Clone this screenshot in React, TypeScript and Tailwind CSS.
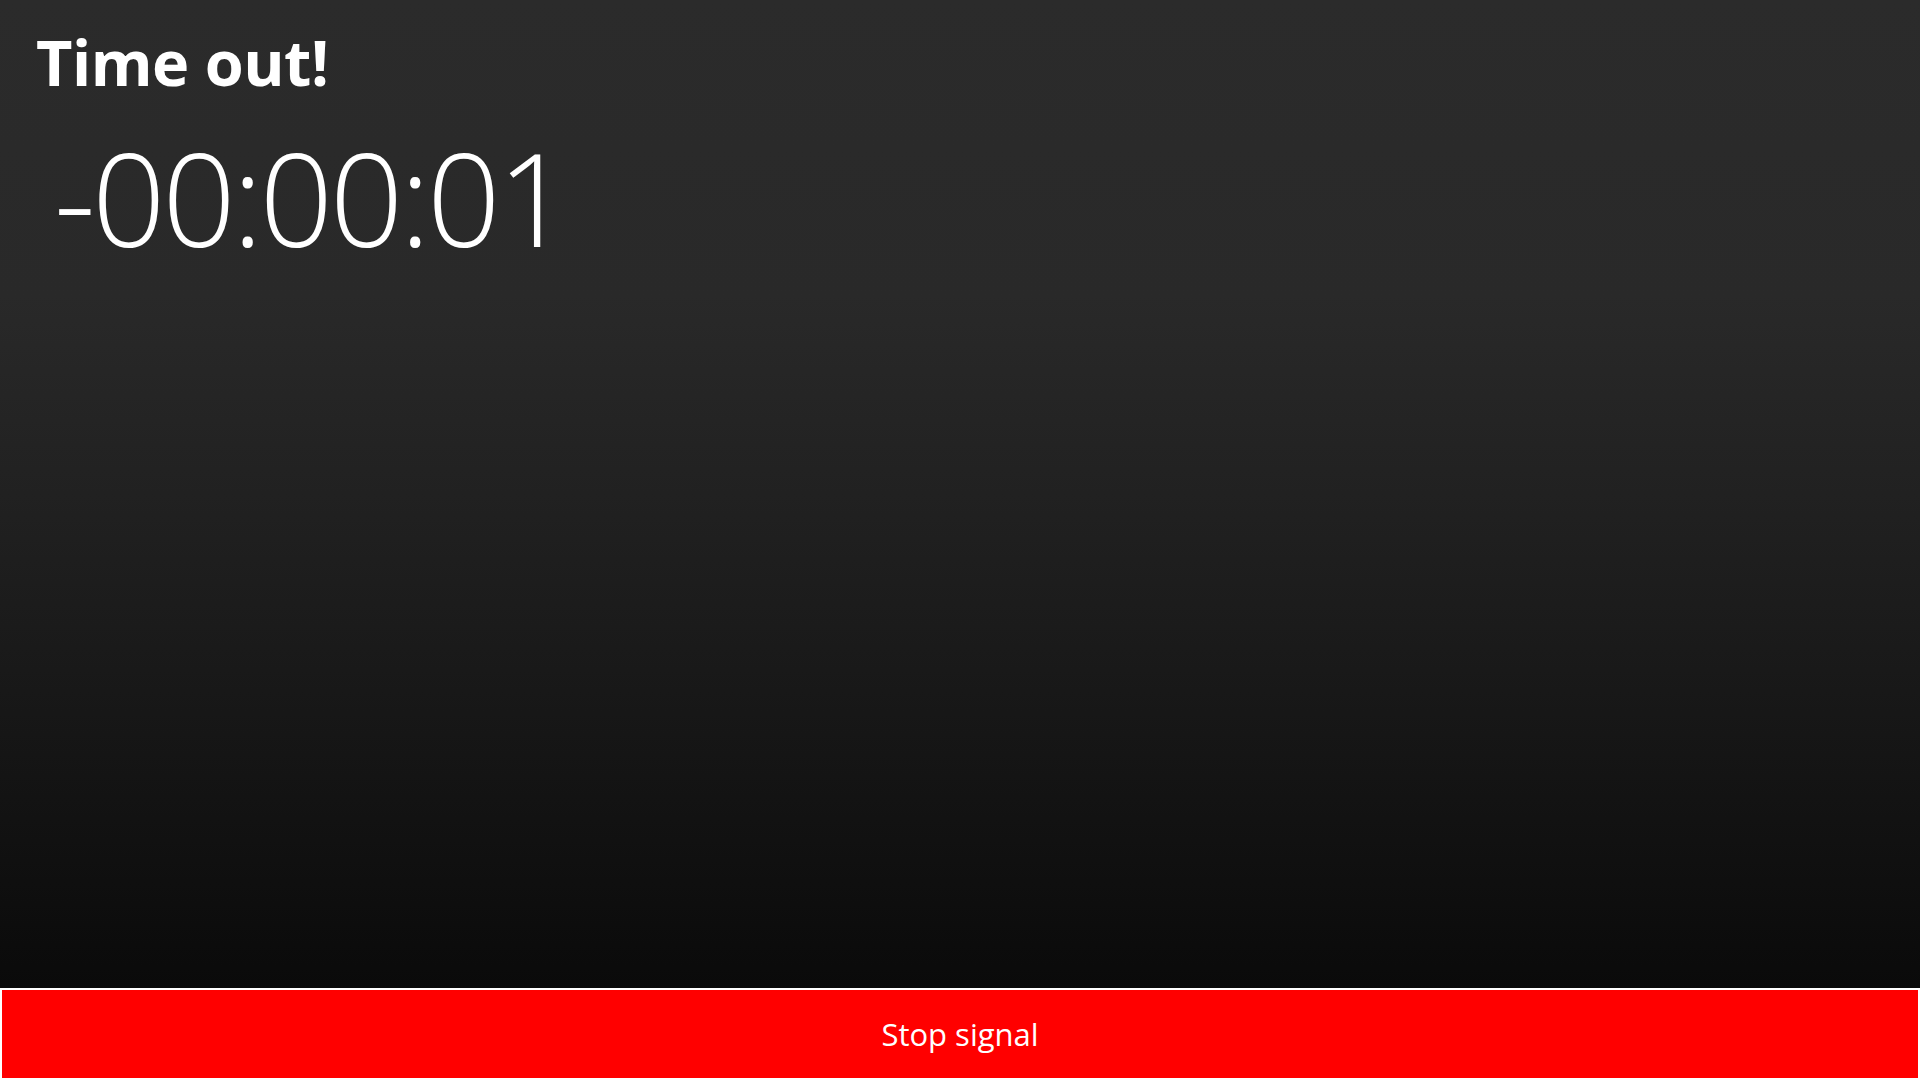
export default function App() {
  return (
    <div className="w-[1920px] h-[1080px] flex flex-col overflow-hidden" style={{ fontFamily: '"Open Sans", "Noto Sans", sans-serif' }}>
      <div className="flex-1 flex flex-col bg-[linear-gradient(180deg,#2b2b2b_0%,#292929_30%,#212121_50%,#181818_70%,#0a0a0a_100%)] pl-[36px] pt-[22px]">
        <h1 className="text-[63px] leading-[80px] font-bold text-white tracking-[-0.5px]">Time out!</h1>
        <div className="mt-[20px] text-[129px] leading-[150px] font-light text-white pl-[18px] tracking-[-3.5px]">-00:00:01</div>
      </div>
      <button className="h-[92px] w-full bg-[#ff0000] border-2 border-white text-white text-[31px] flex items-center justify-center">
        Stop signal
      </button>
    </div>
  );
}
